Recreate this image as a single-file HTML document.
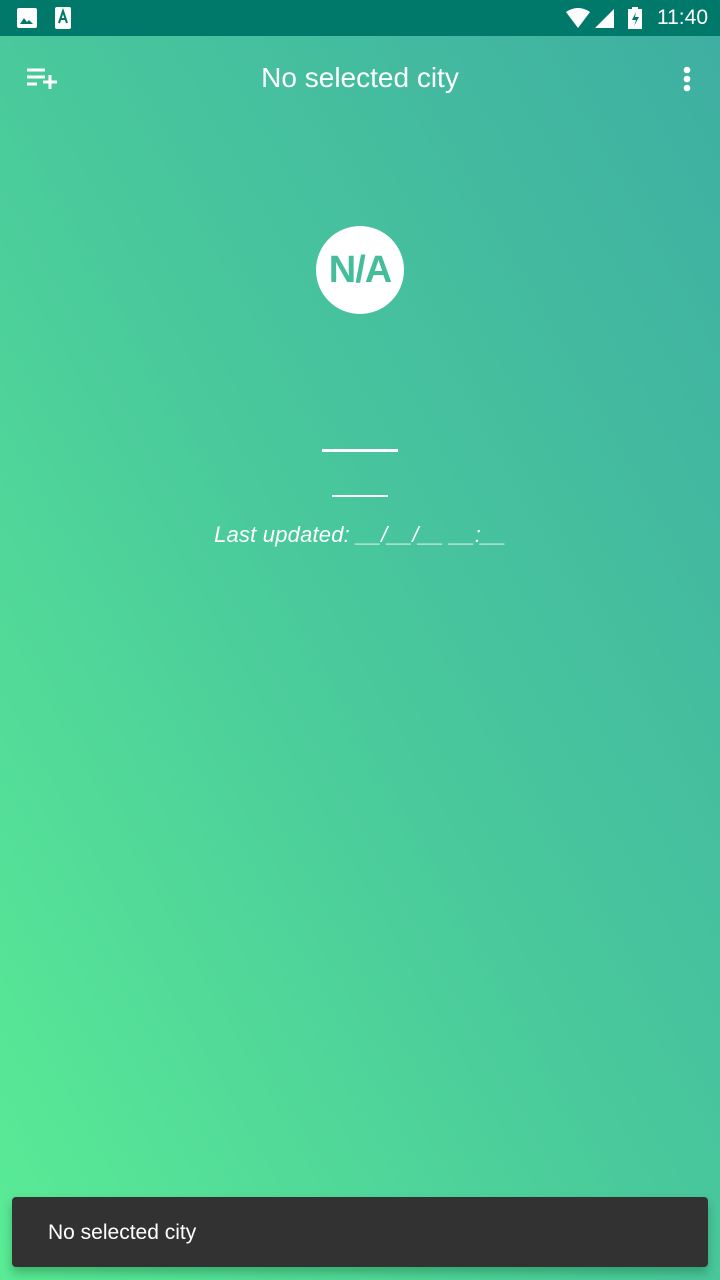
<!DOCTYPE html>
<html><head><meta charset="utf-8"><style>
*{margin:0;padding:0;box-sizing:border-box}
body{width:720px;height:1280px;overflow:hidden;position:relative;font-family:"Liberation Sans",sans-serif;
background:linear-gradient(to top right,#5aec95 0%,#49c89c 50%,#3eaea2 100%);}
.sb{position:absolute;top:0;left:0;width:720px;height:36px;background:#00796b;color:#fff}
.sb .t{position:absolute;right:12px;top:6px;font-size:21px}
.title{position:absolute;top:62px;left:0;width:720px;text-align:center;color:#fff;font-size:28px}
.circ{position:absolute;left:316px;top:226px;width:88px;height:88px;border-radius:50%;background:#fff;color:#46bd9a;font-weight:bold;font-size:38px;text-align:center;line-height:88px;letter-spacing:-1px}
.line{position:absolute;background:#fff;height:3px}
.lu{position:absolute;top:522px;left:0;width:720px;text-align:center;color:#fff;font-style:italic;font-size:22px;letter-spacing:0.2px}
.snack{position:absolute;left:12px;top:1197px;width:696px;height:70px;background:#323232;border-radius:4px;color:#fff;font-size:21px;padding:24px 0 0 36px;box-shadow:0 6px 10px rgba(0,60,20,.3)}
</style></head><body>
<div class="sb">
<svg style="position:absolute;left:17px;top:8px" width="20" height="20" viewBox="0 0 20 20"><rect x="0" y="0" width="20" height="20" rx="2" fill="#fff"/><path d="M3 16l4-6 3 4 2-2 4 4z" fill="#00796b"/></svg>
<svg style="position:absolute;left:55px;top:7px" width="16" height="22" viewBox="0 0 16 22"><rect width="16" height="22" rx="2" fill="#fff"/><path d="M4 16L8 4l4 12M5.5 12h5" stroke="#00796b" stroke-width="2" fill="none"/></svg>
<svg style="position:absolute;left:566px;top:8px" width="50" height="20" viewBox="0 0 50 20"><path d="M0 4Q12-4 24 4L12 20z" fill="#fff"/><path d="M29 20L48 1v19z" fill="#fff"/></svg>
<svg style="position:absolute;left:628px;top:7px" width="14" height="22" viewBox="0 0 14 22"><rect x="4" y="0" width="6" height="3" fill="#fff"/><rect x="0" y="2" width="14" height="20" fill="#fff"/><path d="M8 5l-4 8h4l-2 6 5-9H7z" fill="#00796b"/></svg>
<div class="t">11:40</div>
</div>
<svg style="position:absolute;left:27px;top:68px" width="32" height="22" viewBox="0 0 32 22"><path d="M0 2h18M0 9h18M0 16h10M16 14h14M23 7v14" stroke="#fff" stroke-width="3"/></svg>
<div class="title">No selected city</div>
<svg style="position:absolute;left:680px;top:66px" width="14" height="26"><circle cx="7" cy="4" r="3.3" fill="#fff"/><circle cx="7" cy="13" r="3.3" fill="#fff"/><circle cx="7" cy="22" r="3.3" fill="#fff"/></svg>
<div class="circ">N/A</div>
<div class="line" style="left:322px;top:449px;width:76px"></div>
<div class="line" style="left:332px;top:495px;width:56px;height:2px"></div>
<div class="lu">Last updated: __/__/__ __:__</div>
<div class="snack">No selected city</div>
</body></html>
